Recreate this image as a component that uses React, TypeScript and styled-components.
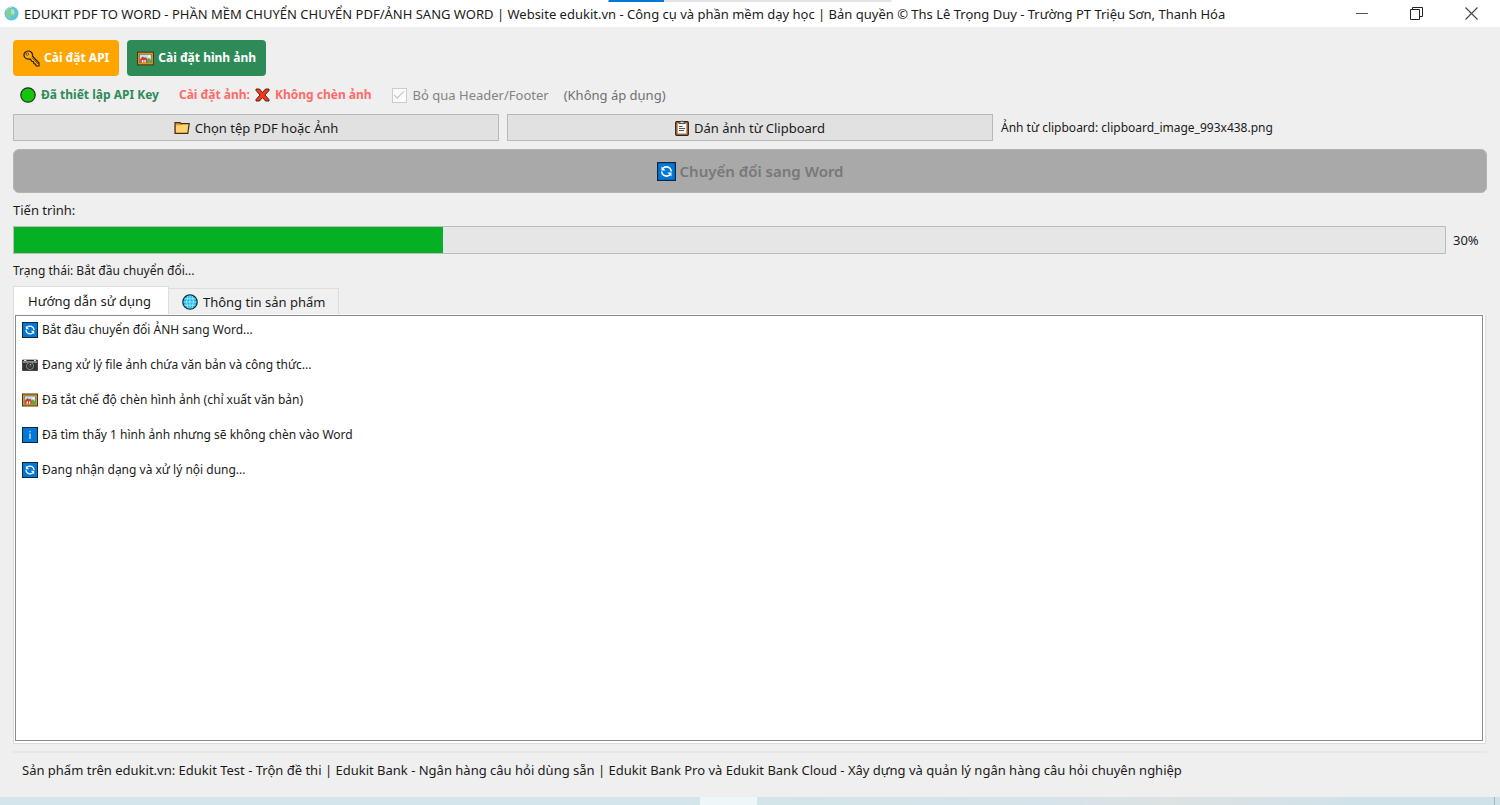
import React from "react";
import styled, { createGlobalStyle, css } from "styled-components";

const GlobalStyle = createGlobalStyle`
  *, *::before, *::after { box-sizing: border-box; }
  html, body { margin: 0; padding: 0; }
  body {
    background: #efefef;
    color: #1b1b1b;
    font-family: "Noto Sans", "Open Sans", sans-serif;
    font-size: 13px;
    line-height: 20px;
  }
  button, input { font: inherit; }
`;

const Window = styled.div`
  position: relative;
  min-height: 100vh;
  display: flex;
  flex-direction: column;
`;

const LoadingStrip = styled.div`
  position: absolute;
  top: 0;
  left: 50%;
  width: 283px;
  height: 2px;
  transform: translateX(-50%);
  background: linear-gradient(to right, #0078d7 56px, #e4e4e4 56px);
`;

const TitleBar = styled.header`
  display: flex;
  align-items: center;
  gap: 5px;
  height: 27px;
  padding: 0 22px 0 4px;
  background: #ffffff;
`;

const Title = styled.h1`
  flex: 1;
  margin: 0;
  font-size: 13px;
  font-weight: 400;
  white-space: nowrap;
`;

const WindowControls = styled.div`
  display: flex;
  gap: 42px;
`;

const ControlButton = styled.button`
  display: flex;
  padding: 0;
  border: 0;
  background: none;
`;

const Content = styled.main`
  flex: 1;
  display: flex;
  flex-direction: column;
  padding: 13px 13px 8px;
`;

const Toolbar = styled.div`
  display: flex;
  gap: 8px;
`;

const ToolButton = styled.button<{ $color: string }>`
  display: flex;
  align-items: center;
  gap: 4px;
  height: 36px;
  padding: 0 10px;
  border: 0;
  border-radius: 4px;
  background: ${(p) => p.$color};
  color: #ffffff;
  font-size: 12px;
  font-weight: 700;
  white-space: nowrap;
`;

const StatusRow = styled.div`
  display: flex;
  align-items: center;
  height: 38px;
  padding-left: 7px;
  white-space: nowrap;
`;

const StatusText = styled.span<{ $color: string }>`
  display: flex;
  align-items: center;
  gap: 5px;
  margin-right: 20px;
  color: ${(p) => p.$color};
  font-size: 12px;
  font-weight: 700;
`;

const Option = styled.label`
  display: flex;
  align-items: center;
  gap: 6px;
  margin-right: 15px;
  color: #838383;
`;

const CheckBox = styled.input`
  appearance: none;
  display: flex;
  align-items: center;
  justify-content: center;
  width: 15px;
  height: 15px;
  margin: 0;
  border: 1px solid #cccccc;
  background: #fbfbfb;
  &:checked::before {
    content: "";
    width: 10px;
    height: 5px;
    margin-bottom: 3px;
    border: solid #c0c0c0;
    border-width: 0 0 1px 1px;
    transform: rotate(-45deg);
  }
`;

const Hint = styled.span`
  color: #707070;
`;

const SourceRow = styled.div`
  display: grid;
  grid-template-columns: repeat(3, minmax(0, 1fr));
  align-items: center;
  gap: 8px;
`;

const SourceButton = styled.button`
  display: flex;
  align-items: center;
  justify-content: center;
  gap: 5px;
  height: 27px;
  padding: 0;
  border: 1px solid #b8b8b8;
  background: #e1e1e1;
  color: #1b1b1b;
`;

const SourceName = styled.span`
  font-size: 12px;
  white-space: nowrap;
`;

const ConvertButton = styled.button`
  display: flex;
  align-items: center;
  justify-content: center;
  gap: 4px;
  height: 44px;
  margin-top: 8px;
  border: 1px solid #b4b4b4;
  border-radius: 6px;
  background: #a9a9a9;
  color: #787878;
  font-size: 15px;
  font-weight: 600;
`;

const ProgressLabel = styled.label`
  margin: 7px 0 6px;
`;

const ProgressRow = styled.div`
  display: flex;
  align-items: center;
  gap: 7px;
`;

const ProgressBar = styled.progress`
  appearance: none;
  flex: 1;
  height: 28px;
  border: 1px solid #bcbcbc;
  background: #e6e6e6;
  &::-webkit-progress-bar { background: #e6e6e6; }
  &::-webkit-progress-value { background: #06b025; }
`;

const ProgressValue = styled.output`
  width: 34px;
`;

const StatusLine = styled.p`
  margin: 7px 0 5px;
  font-size: 12px;
`;

const TabList = styled.div`
  display: flex;
  align-items: flex-end;
  height: 28px;
`;

const Tab = styled.button<{ $active?: boolean }>`
  display: flex;
  align-items: center;
  gap: 5px;
  height: 26px;
  padding: 0 13px;
  border: 1px solid #dddddd;
  border-bottom: 0;
  border-left: 0;
  background: #f0f0f0;
  color: #1b1b1b;
  white-space: nowrap;
  ${(p) =>
    p.$active &&
    css`
      height: 28px;
      padding: 0 17px 0 14px;
      border-left: 1px solid #dddddd;
      background: #ffffff;
    `}
`;

const TabPanel = styled.section`
  flex: 1;
  display: flex;
  margin-right: 1px;
  padding: 0 2px 2px 1px;
  border: 1px solid #dcdcdc;
  border-top-color: #f8f8f8;
  background: #ffffff;
`;

const Log = styled.ul`
  flex: 1;
  display: flex;
  flex-direction: column;
  gap: 15px;
  margin: 0;
  padding: 4px 6px;
  border: 1px solid #8c8c8c;
  list-style: none;
  font-size: 12px;
`;

const LogLine = styled.li`
  display: flex;
  align-items: center;
  gap: 4px;
`;

const Footer = styled.footer`
  margin-top: 7px;
  padding: 7px 9px 9px;
  border-top: 2px solid #e7e7e7;
  white-space: nowrap;
`;

const Taskbar = styled.div`
  height: 8px;
  background: linear-gradient(
    to right,
    #d5e5ec 46.7%,
    #edf6f8 46.7%,
    #edf6f8 50.5%,
    #d3e5e9 50.5%,
    #d6e3ea 70%,
    #dde2e2 78%,
    #d0e2e9 90%,
    #d0e2e9 calc(100% - 6px),
    #a9b4ba calc(100% - 6px),
    #a9b4ba calc(100% - 5px),
    #d0e2e9 calc(100% - 5px)
  );
`;

type IconProps = { size?: number };

const GlobeLogo = () => (
  <svg width="15" height="15" viewBox="0 0 15 15" aria-hidden="true">
    <circle cx="7.5" cy="7.5" r="7" fill="#5cc3dc" />
    <path d="M1.5 4.5C3 2 5 1.5 7 2L6 5 8 8 7 11 5 13C2 11 1 8 1.5 4.5Z" fill="#82cf9c" />
    <path d="M7 3L10 3.5 11 7 9 9.5 7 7Z" fill="#b5e3a8" />
    <path d="M2 4Q4 1 8 1" stroke="#b4e6ef" fill="none" />
  </svg>
);

const KeyIcon = () => (
  <svg width="17" height="17" viewBox="0 0 17 17" aria-hidden="true">
    <path
      d="M2 2.5Q4 .3 7 1.3 10 2.7 9.5 6.2L16 13V16H13.3L12.5 14.2 10.9 13.5 10.5 11.8 8.8 11.2 7.2 9Q4 9.8 2 7.6-.1 5 2 2.5Z"
      fill="#ffad0a"
      stroke="#2b210d"
      strokeWidth="1.2"
    />
    <circle cx="4.3" cy="4.1" r="1.2" fill="#efefef" stroke="#2b210d" strokeWidth=".8" />
    <path d="M8.8 7.5L15 14" stroke="#604000" strokeWidth=".8" />
  </svg>
);

const PictureIcon = ({ size = 16 }: IconProps) => (
  <svg width={size} height={size} viewBox="0 0 16 16" aria-hidden="true">
    <rect x=".5" y="2" width="15" height="12" fill="#d99a25" stroke="#49350f" />
    <rect x="2.5" y="4" width="11" height="8" fill="#bce4f4" stroke="#7b6536" strokeWidth=".6" />
    <path d="M8 12V9.5L11 7.5 13.3 9.5V12Z" fill="#58a944" />
    <path d="M3 8.5L5.5 6 7 7.2 8.5 6.5 9.5 8.5V11.7H3Z" fill="#d83b2e" />
    <path d="M4.6 9.5H6V11.7H4.6ZM7 9.5H8.2V11.7H7Z" fill="#fff" />
    <circle cx="11.5" cy="6.2" r="1" fill="#fff" />
  </svg>
);

const GreenDot = () => (
  <svg width="16" height="16" viewBox="0 0 16 16" aria-hidden="true">
    <circle cx="8" cy="8" r="7.2" fill="#16c60c" stroke="#17351b" strokeWidth="1.2" />
  </svg>
);

const CrossIcon = () => (
  <svg width="15" height="14" viewBox="0 0 15 14" aria-hidden="true">
    <path
      d="M1 1H4.5L7.5 4.5 10.5 1H14V2.5L10 7 14 11.5V13H10.5L7.5 9.5 4.5 13H1V11.5L5 7 1 2.5Z"
      fill="#f03a17"
      stroke="#4a1a14"
      strokeWidth=".9"
    />
  </svg>
);

const FolderIcon = () => (
  <svg width="16" height="14" viewBox="0 0 16 14" aria-hidden="true">
    <path d="M1 12.3V1.7H6L7.3 2.7H15.2L13.8 12.3Z" fill="#dd9c21" stroke="#3b3020" strokeWidth="1.2" />
    <path d="M2 11.6V4.3H7L8.5 3.5H14.3L13.1 11.6Z" fill="#ffd172" />
  </svg>
);

const ClipboardIcon = () => (
  <svg width="14" height="16" viewBox="0 0 14 16" aria-hidden="true">
    <rect x=".7" y="1.7" width="12.6" height="13.6" rx="1" fill="#bb7c48" stroke="#30251d" strokeWidth="1.3" />
    <path d="M2.7 3.5H11.3V13.5H2.7Z" fill="#f5f5f5" />
    <path d="M4 3.5V2H5.5Q7 -.2 8.5 2H10V3.5Z" fill="#ddd" stroke="#333" strokeWidth=".8" />
    <path d="M4 6.5H7.5M4 8.5H10M4 10.5H9" stroke="#555" />
  </svg>
);

const SyncIcon = ({ size = 16 }: IconProps) => (
  <svg width={size} height={size} viewBox="0 0 16 16" aria-hidden="true">
    <rect x=".5" y=".5" width="15" height="15" fill="#0078d7" stroke="#10253a" />
    <path d="M5 5.2Q8 3 10.8 5.2 12 6.4 12 8M11 10.8Q8 13 5.2 10.8 4 9.6 4 8" fill="none" stroke="#fff" strokeWidth="1.3" />
    <path d="M3.8 3.8V7.2H7.2ZM12.2 12.2V8.8H8.8Z" fill="#fff" />
  </svg>
);

const CameraIcon = () => (
  <svg width="16" height="16" viewBox="0 0 16 16" aria-hidden="true">
    <path d="M.5 3H15.5V13.5H.5Z" fill="#343434" stroke="#111" strokeWidth=".6" />
    <path d="M1 5H15" stroke="#aaa" strokeWidth="1.4" />
    <path d="M2 3.5H4.5M12 3.5H14" stroke="#ddd" />
    <circle cx="8" cy="9" r="3.5" fill="#222" stroke="#8f8f8f" />
    <circle cx="8" cy="9" r="2" fill="#4a4a4a" />
    <circle cx="8.4" cy="7.6" r=".6" fill="#ddd" />
  </svg>
);

const InfoIcon = () => (
  <svg width="16" height="16" viewBox="0 0 16 16" aria-hidden="true">
    <rect x=".5" y=".5" width="15" height="15" fill="#0078d7" stroke="#10253a" />
    <path d="M8 4V5.3M8 6.5V12" stroke="#d9eeff" strokeWidth="1.2" />
  </svg>
);

const WebIcon = () => (
  <svg width="16" height="16" viewBox="0 0 16 16" aria-hidden="true">
    <circle cx="8" cy="8" r="7.2" fill="#18b7ec" stroke="#14303c" strokeWidth="1.3" />
    <path
      d="M8 1.5V14.5M1.5 8H14.5M2.5 4.8H13.5M2.5 11.2H13.5M6 1.8Q3 8 6 14.2M10 1.8Q13 8 10 14.2"
      fill="none"
      stroke="#b5edff"
      strokeWidth=".8"
    />
  </svg>
);

const MinimizeIcon = () => (
  <svg width="12" height="13" viewBox="0 0 12 13" aria-hidden="true">
    <path d="M0 6.5H12" stroke="#555" />
  </svg>
);

const RestoreIcon = () => (
  <svg width="13" height="13" viewBox="0 0 13 13" aria-hidden="true">
    <path d="M.5 2.5H9.5V12.5H.5ZM2.5 2V.5H12.5V9.5H10" fill="none" stroke="#222" />
  </svg>
);

const CloseIcon = () => (
  <svg width="13" height="13" viewBox="0 0 13 13" aria-hidden="true">
    <path d="M.5 .5L12.5 12.5M12.5 .5L.5 12.5" stroke="#444" strokeWidth="1.1" />
  </svg>
);

const logLines = [
  { icon: <SyncIcon />, text: "Bắt đầu chuyển đổi ẢNH sang Word..." },
  { icon: <CameraIcon />, text: "Đang xử lý file ảnh chứa văn bản và công thức..." },
  { icon: <PictureIcon />, text: "Đã tắt chế độ chèn hình ảnh (chỉ xuất văn bản)" },
  { icon: <InfoIcon />, text: "Đã tìm thấy 1 hình ảnh nhưng sẽ không chèn vào Word" },
  { icon: <SyncIcon />, text: "Đang nhận dạng và xử lý nội dung..." },
];

export default function App() {
  return (
    <>
      <GlobalStyle />
      <Window>
        <TitleBar>
          <GlobeLogo />
          <Title>
            EDUKIT PDF TO WORD - PHẦN MỀM CHUYỂN CHUYỂN PDF/ẢNH SANG WORD | Website edukit.vn - Công cụ và phần mềm dạy học | Bản quyền © Ths Lê Trọng Duy - Trường PT Triệu Sơn, Thanh Hóa
          </Title>
          <WindowControls>
            <ControlButton aria-label="Thu nhỏ"><MinimizeIcon /></ControlButton>
            <ControlButton aria-label="Khôi phục"><RestoreIcon /></ControlButton>
            <ControlButton aria-label="Đóng"><CloseIcon /></ControlButton>
          </WindowControls>
        </TitleBar>
        <LoadingStrip />

        <Content>
          <Toolbar>
            <ToolButton $color="#ffa500"><KeyIcon />Cài đặt API</ToolButton>
            <ToolButton $color="#2e8b57"><PictureIcon size={17} />Cài đặt hình ảnh</ToolButton>
          </Toolbar>

          <StatusRow>
            <StatusText $color="#2e8b57"><GreenDot />Đã thiết lập API Key</StatusText>
            <StatusText $color="#ff6b6b">Cài đặt ảnh: <CrossIcon /> Không chèn ảnh</StatusText>
            <Option>
              <CheckBox type="checkbox" defaultChecked disabled />
              Bỏ qua Header/Footer
            </Option>
            <Hint>(Không áp dụng)</Hint>
          </StatusRow>

          <SourceRow>
            <SourceButton><FolderIcon />Chọn tệp PDF hoặc Ảnh</SourceButton>
            <SourceButton><ClipboardIcon />Dán ảnh từ Clipboard</SourceButton>
            <SourceName>Ảnh từ clipboard: clipboard_image_993x438.png</SourceName>
          </SourceRow>

          <ConvertButton disabled><SyncIcon size={19} />Chuyển đổi sang Word</ConvertButton>

          <ProgressLabel htmlFor="progress">Tiến trình:</ProgressLabel>
          <ProgressRow>
            <ProgressBar id="progress" value={30} max={100} />
            <ProgressValue htmlFor="progress">30%</ProgressValue>
          </ProgressRow>
          <StatusLine>Trạng thái: Bắt đầu chuyển đổi...</StatusLine>

          <TabList role="tablist">
            <Tab role="tab" aria-selected="true" aria-controls="guide" $active>Hướng dẫn sử dụng</Tab>
            <Tab role="tab" aria-selected="false"><WebIcon />Thông tin sản phẩm</Tab>
          </TabList>
          <TabPanel id="guide" role="tabpanel">
            <Log>
              {logLines.map((line, i) => (
                <LogLine key={i}>{line.icon}{line.text}</LogLine>
              ))}
            </Log>
          </TabPanel>

          <Footer>
            Sản phẩm trên edukit.vn: Edukit Test - Trộn đề thi | Edukit Bank - Ngân hàng câu hỏi dùng sẵn | Edukit Bank Pro và Edukit Bank Cloud - Xây dựng và quản lý ngân hàng câu hỏi chuyên nghiệp
          </Footer>
        </Content>
        <Taskbar />
      </Window>
    </>
  );
}
